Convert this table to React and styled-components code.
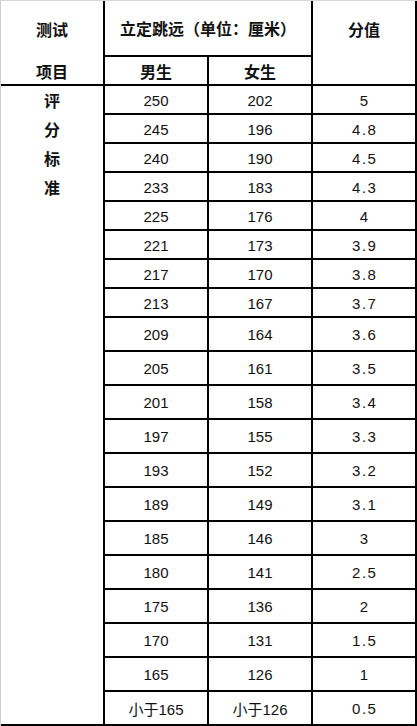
import React from "react";
import styled, { createGlobalStyle } from "styled-components";

const rows = [
  ["250", "202", "5"],
  ["245", "196", "4.8"],
  ["240", "190", "4.5"],
  ["233", "183", "4.3"],
  ["225", "176", "4"],
  ["221", "173", "3.9"],
  ["217", "170", "3.8"],
  ["213", "167", "3.7"],
  ["209", "164", "3.6"],
  ["205", "161", "3.5"],
  ["201", "158", "3.4"],
  ["197", "155", "3.3"],
  ["193", "152", "3.2"],
  ["189", "149", "3.1"],
  ["185", "146", "3"],
  ["180", "141", "2.5"],
  ["175", "136", "2"],
  ["170", "131", "1.5"],
  ["165", "126", "1"],
  ["小于165", "小于126", "0.5"],
];

export default function App() {
  return (
    <>
      <GlobalStyle />
      <Table>
        <HeadCell $noBottom>测试</HeadCell>
        <HeadCell $span={2}>立定跳远（单位：厘米）</HeadCell>
        <ScoreHead>分值</ScoreHead>
        <HeadCell>项目</HeadCell>
        <HeadCell>男生</HeadCell>
        <HeadCell>女生</HeadCell>

        <SideCell $rows={rows.length}>
          {"评分标准".split("").map((ch) => (
            <span key={ch}>{ch}</span>
          ))}
        </SideCell>

        {rows.map((r, index) => (
          <React.Fragment key={index}>
            <Cell>{r[0]}</Cell>
            <Cell>{r[1]}</Cell>
            <Cell $score>{r[2]}</Cell>
          </React.Fragment>
        ))}
      </Table>
    </>
  );
}

const GlobalStyle = createGlobalStyle`
  html, body {
    margin: 0;
    padding: 0;
    background: #fff;
  }
  body {
    font-family: "Liberation Sans", "Noto Sans CJK SC", sans-serif;
    color: #111;
  }
`;

const Table = styled.div`
  display: grid;
  width: 417px;
  box-sizing: border-box;
  grid-template-columns: repeat(4, 104px);
  grid-template-rows: 56px 29px repeat(8, 29px) repeat(12, 34px);
  border-left: 1px solid #cfcfcf;
  border-top: 1px solid #d8d8d8;
`;

const Cell = styled.div`
  box-sizing: border-box;
  display: flex;
  align-items: center;
  justify-content: center;
  border-right: 2px solid #000;
  border-bottom: 2px solid #000;
  font-size: 15px;
  padding-top: 1px;
  letter-spacing: ${(p) => (p.$score ? "1.5px" : "0")};
  padding-left: ${(p) => (p.$score ? "1.5px" : "0")};
`;

const HeadCell = styled.div`
  box-sizing: border-box;
  display: flex;
  align-items: center;
  justify-content: center;
  grid-column: span ${(p) => p.$span || 1};
  border-right: 2px solid #000;
  border-bottom: ${(p) => (p.$noBottom ? "none" : "2px solid #000")};
  font-family: "Noto Sans CJK SC", sans-serif;
  font-weight: 700;
  font-size: 16px;
`;

const ScoreHead = styled(HeadCell)`
  grid-row: span 2;
  align-items: flex-start;
  padding-top: 17px;
  line-height: 22px;
`;

const SideCell = styled.div`
  box-sizing: border-box;
  grid-row: span ${(p) => p.$rows};
  display: flex;
  flex-direction: column;
  align-items: center;
  border-right: 2px solid #000;
  border-bottom: 2px solid #000;
  font-family: "Noto Sans CJK SC", sans-serif;
  font-weight: 700;
  font-size: 16px;

  span {
    line-height: 29px;
    height: 29px;
  }
`;
